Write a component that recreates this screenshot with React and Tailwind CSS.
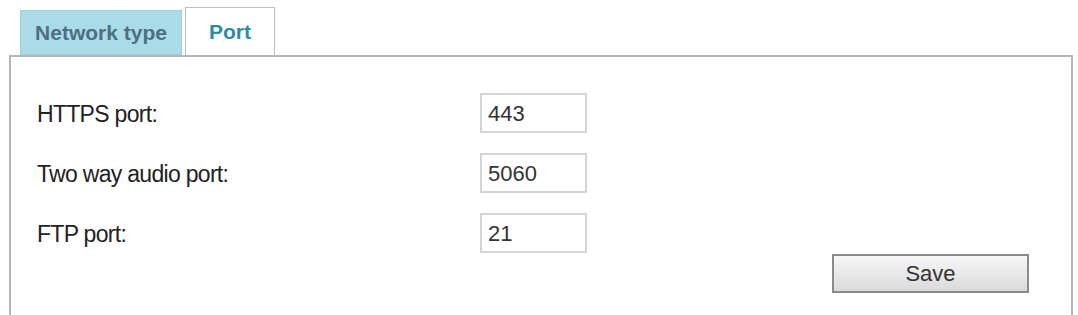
import React from "react";

const PORTS = [
  { label: "HTTPS port:", value: "443" },
  { label: "Two way audio port:", value: "5060" },
  { label: "FTP port:", value: "21" },
];

export default function App() {
  return (
    <div className="h-[315px] overflow-hidden bg-white font-['Liberation_Sans',Arial,sans-serif]">
      {/* Tabs */}
      <div className="flex items-end gap-[3px] pl-[20px] pt-[7px]">
        <div className="flex h-[45px] w-[162px] items-center justify-center border border-[#9fcfdb] bg-[#a9dce8] text-[21px] font-bold text-[#4d6f80]">
          Network type
        </div>
        <div className="flex h-[48px] w-[90px] items-center justify-center border border-b-0 border-[#bdbdbd] bg-white text-[21px] font-bold text-[#2f8ba3]">
          Port
        </div>
      </div>

      {/* Panel */}
      <div className="ml-[9px] h-[300px] w-[1064px] border-x-2 border-t-2 border-[#b5b5b5] pl-[26px] pr-[42px] pt-[36px]">
        <div className="flex flex-col gap-[20px]">
          {PORTS.map((p) => (
            <div key={p.label} className="flex h-[40px] items-center">
              <div className="w-[443px] pt-[3px] text-[23px] tracking-[-0.7px] text-[#222]">{p.label}</div>
              <div className="flex h-[40px] w-[107px] items-center border-2 border-[#d4d4d4] bg-white pl-[6px] text-[22px] text-[#333]">
                {p.value}
              </div>
            </div>
          ))}
        </div>
        <div className="mt-[1px] flex justify-end">
          <button className="h-[39px] w-[197px] border-2 border-[#8a8a8a] bg-gradient-to-b from-[#f7f7f7] to-[#dadada] text-[22px] text-[#333]">
            Save
          </button>
        </div>
      </div>
    </div>
  );
}
